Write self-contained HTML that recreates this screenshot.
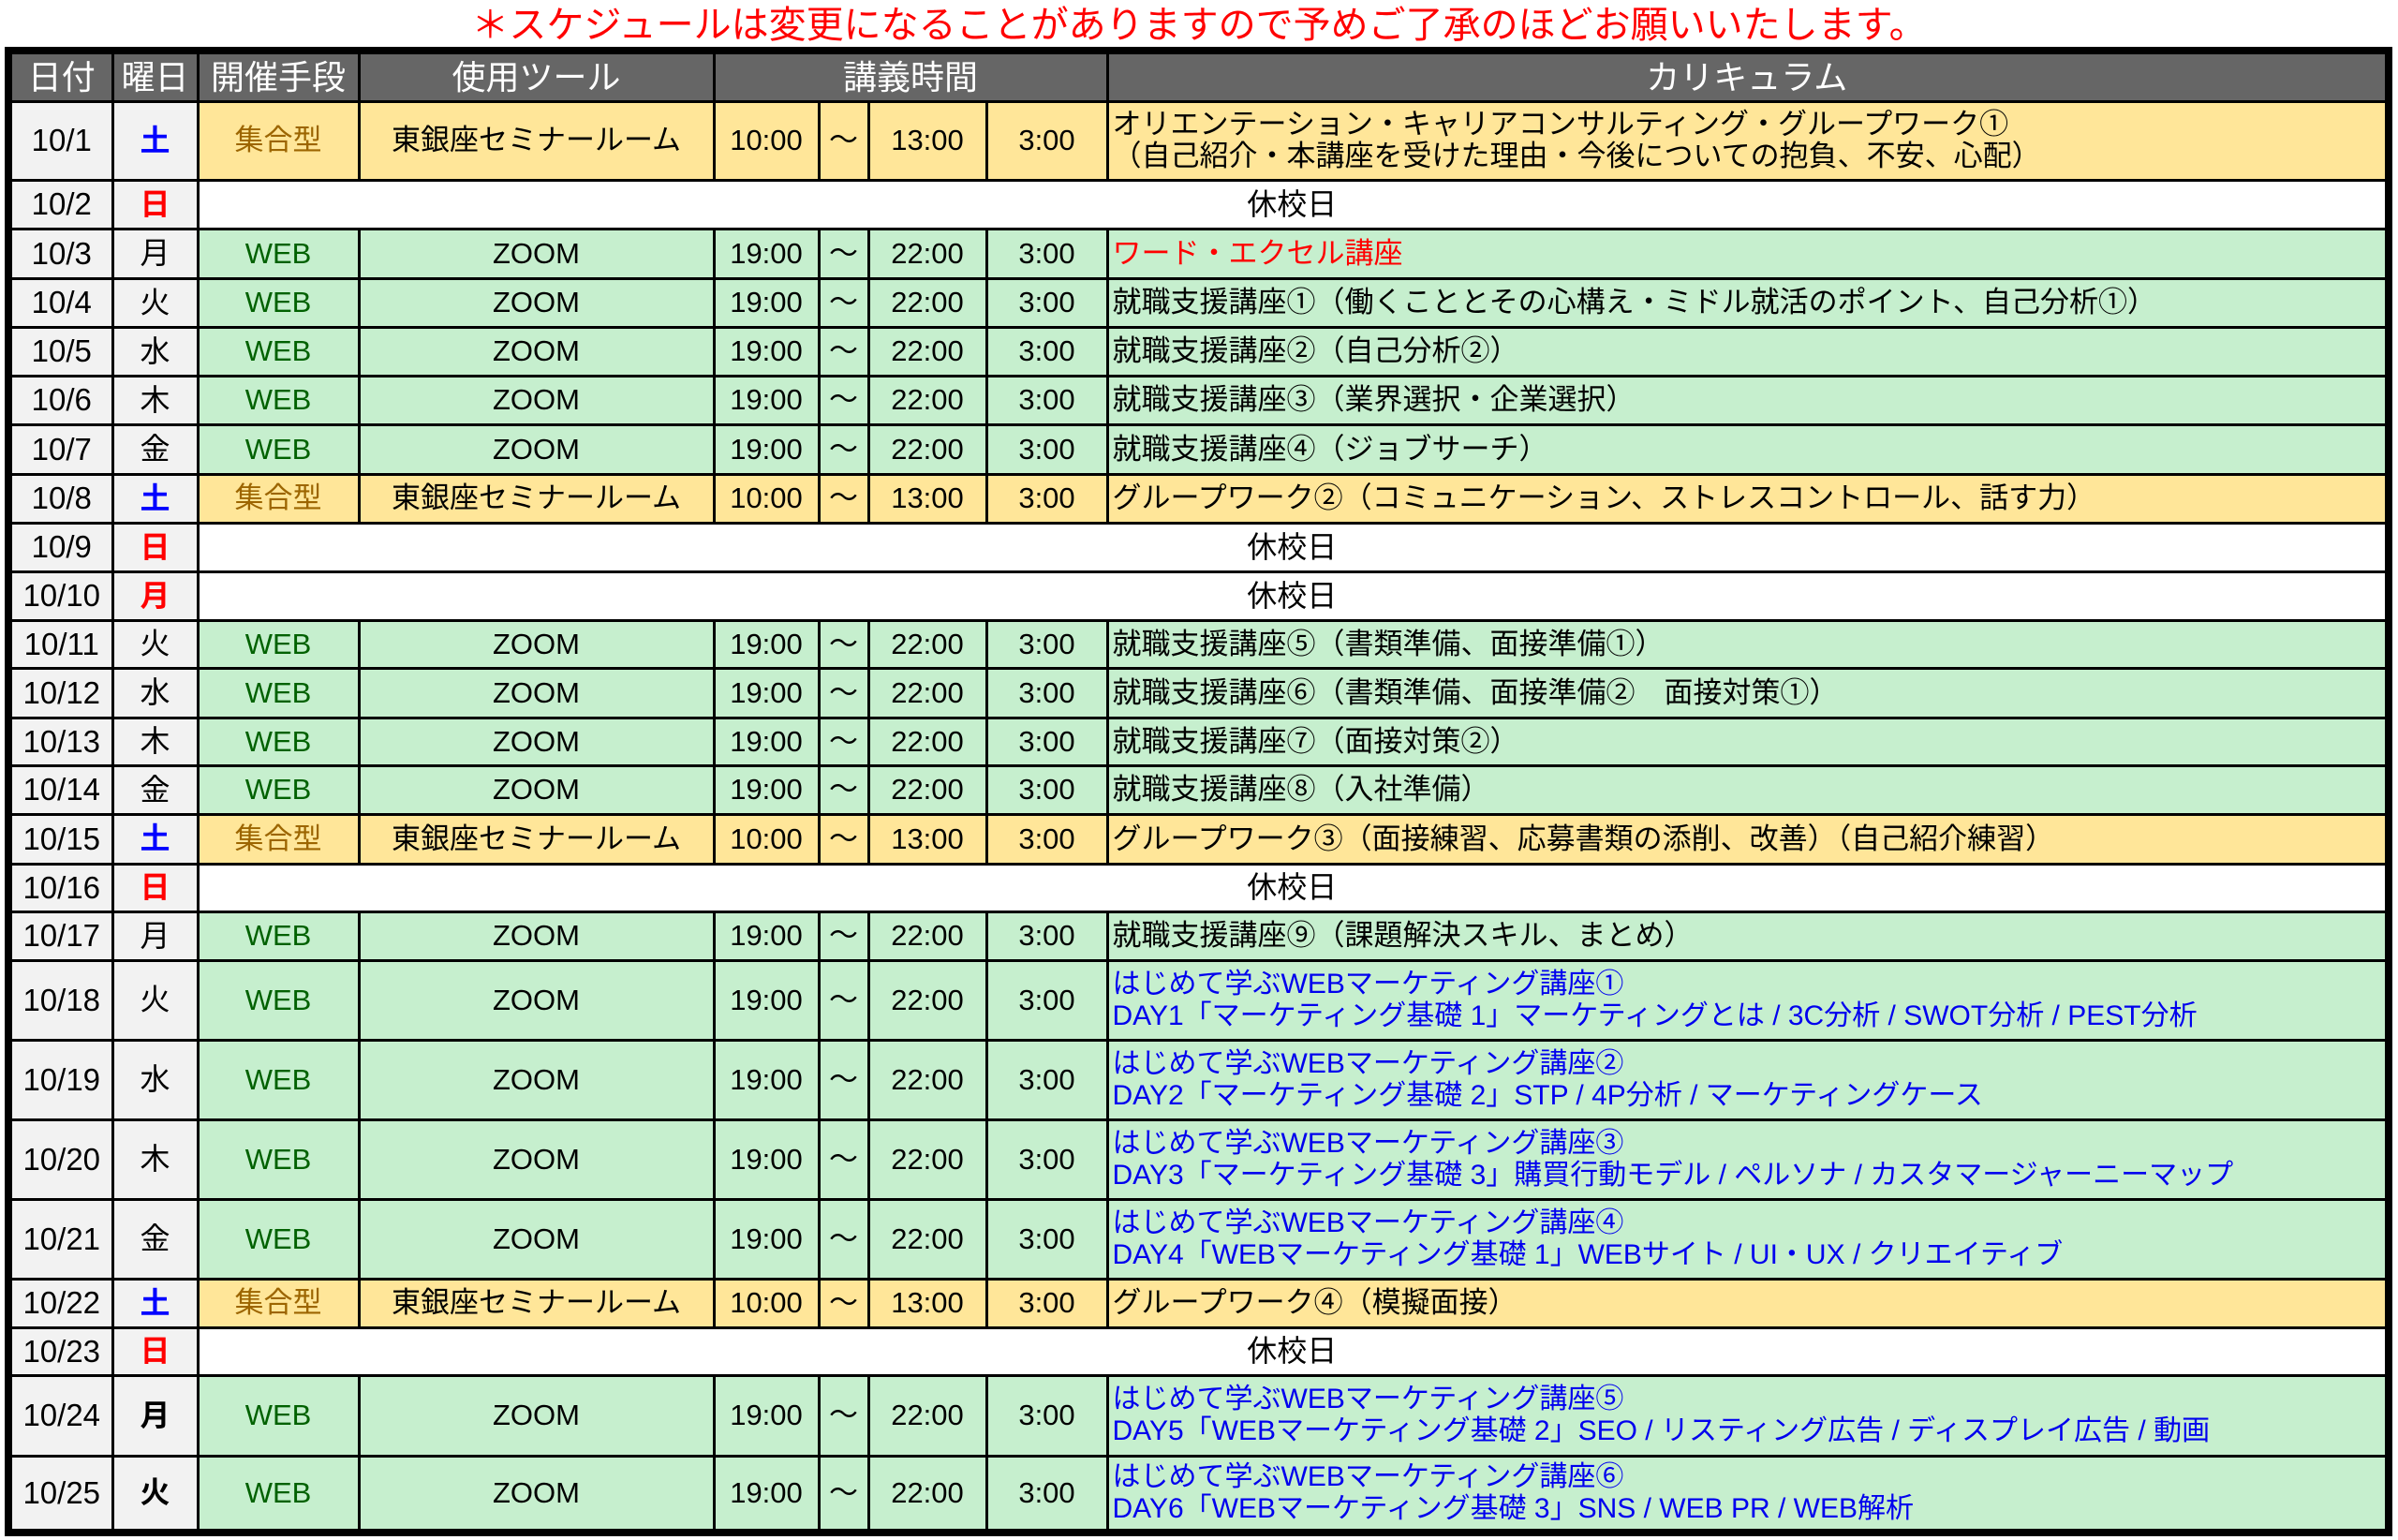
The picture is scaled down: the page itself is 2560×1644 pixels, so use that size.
<!DOCTYPE html>
<html><head><meta charset="utf-8">
<style>
html,body{margin:0;padding:0;background:#fff;width:2560px;height:1644px;overflow:hidden}
body{font-family:"Liberation Sans","Noto Sans CJK JP",sans-serif;color:#000;position:relative}
.title{position:absolute;top:0;left:0;width:2560px;height:54px;text-align:center;color:#ff0000;font-size:40px;line-height:54px;white-space:nowrap}
table{position:absolute;left:5px;top:50px;border-collapse:collapse;table-layout:fixed;border:8px solid #000}
td{border:3px solid #000;padding:0;text-align:center;vertical-align:middle;font-size:31px;line-height:1.15;white-space:nowrap;overflow:hidden}
tr.h td{background:#666;color:#fff;font-size:36px}
td.d{background:#f2f2f2;font-size:33px}
td.w{background:#f2f2f2;font-size:32px}
.Y td.c{background:#ffe699}
.G td.c{background:#c6efce}
.Y td.m{color:#9c6500}
.G td.m{color:#006100}
td.k{text-align:left;padding-left:4px;font-size:31px}
td.k2{text-align:left;padding-left:4px;font-size:30px;line-height:34px;color:#0000ee}
td.hol{background:#fff;font-size:32px}
.b{color:#0000ff;font-weight:bold}
.r{color:#ff0000;font-weight:bold}
.bk{font-weight:bold}
.red{color:#ff0000}
</style></head><body>
<div class="title">＊スケジュールは変更になることがありますので予めご了承のほどお願いいたします。</div>
<table>
<colgroup><col style="width:111px"><col style="width:91px"><col style="width:172px"><col style="width:379px"><col style="width:112px"><col style="width:53px"><col style="width:126px"><col style="width:129px"><col style="width:1368px"></colgroup>
<tr class="h" style="height:54px"><td>日付</td><td>曜日</td><td>開催手段</td><td>使用ツール</td><td colspan="4">講義時間</td><td>カリキュラム</td></tr>
<tr class="Y" style="height:84px"><td class="d">10/1</td><td class="w b">土</td><td class="c m">集合型</td><td class="c">東銀座セミナールーム</td><td class="c">10:00</td><td class="c">～</td><td class="c">13:00</td><td class="c">3:00</td><td class="c k" style="line-height:34px">オリエンテーション・キャリアコンサルティング・グループワーク①<br>（自己紹介・本講座を受けた理由・今後についての抱負、不安、心配）</td></tr>
<tr style="height:52px"><td class="d">10/2</td><td class="w r">日</td><td class="hol" colspan="7">休校日</td></tr>
<tr class="G" style="height:53px"><td class="d">10/3</td><td class="w">月</td><td class="c m">WEB</td><td class="c">ZOOM</td><td class="c">19:00</td><td class="c">～</td><td class="c">22:00</td><td class="c">3:00</td><td class="c k red">ワード・エクセル講座</td></tr>
<tr class="G" style="height:52px"><td class="d">10/4</td><td class="w">火</td><td class="c m">WEB</td><td class="c">ZOOM</td><td class="c">19:00</td><td class="c">～</td><td class="c">22:00</td><td class="c">3:00</td><td class="c k">就職支援講座①（働くこととその心構え・ミドル就活のポイント、自己分析①）</td></tr>
<tr class="G" style="height:52px"><td class="d">10/5</td><td class="w">水</td><td class="c m">WEB</td><td class="c">ZOOM</td><td class="c">19:00</td><td class="c">～</td><td class="c">22:00</td><td class="c">3:00</td><td class="c k">就職支援講座②（自己分析②）</td></tr>
<tr class="G" style="height:52px"><td class="d">10/6</td><td class="w">木</td><td class="c m">WEB</td><td class="c">ZOOM</td><td class="c">19:00</td><td class="c">～</td><td class="c">22:00</td><td class="c">3:00</td><td class="c k">就職支援講座③（業界選択・企業選択）</td></tr>
<tr class="G" style="height:53px"><td class="d">10/7</td><td class="w">金</td><td class="c m">WEB</td><td class="c">ZOOM</td><td class="c">19:00</td><td class="c">～</td><td class="c">22:00</td><td class="c">3:00</td><td class="c k">就職支援講座④（ジョブサーチ）</td></tr>
<tr class="Y" style="height:52px"><td class="d">10/8</td><td class="w b">土</td><td class="c m">集合型</td><td class="c">東銀座セミナールーム</td><td class="c">10:00</td><td class="c">～</td><td class="c">13:00</td><td class="c">3:00</td><td class="c k">グループワーク②（コミュニケーション、ストレスコントロール、話す力）</td></tr>
<tr style="height:52px"><td class="d">10/9</td><td class="w r">日</td><td class="hol" colspan="7">休校日</td></tr>
<tr style="height:52px"><td class="d">10/10</td><td class="w r">月</td><td class="hol" colspan="7">休校日</td></tr>
<tr class="G" style="height:51px"><td class="d">10/11</td><td class="w">火</td><td class="c m">WEB</td><td class="c">ZOOM</td><td class="c">19:00</td><td class="c">～</td><td class="c">22:00</td><td class="c">3:00</td><td class="c k">就職支援講座⑤（書類準備、面接準備①）</td></tr>
<tr class="G" style="height:53px"><td class="d">10/12</td><td class="w">水</td><td class="c m">WEB</td><td class="c">ZOOM</td><td class="c">19:00</td><td class="c">～</td><td class="c">22:00</td><td class="c">3:00</td><td class="c k">就職支援講座⑥（書類準備、面接準備②　面接対策①）</td></tr>
<tr class="G" style="height:51px"><td class="d">10/13</td><td class="w">木</td><td class="c m">WEB</td><td class="c">ZOOM</td><td class="c">19:00</td><td class="c">～</td><td class="c">22:00</td><td class="c">3:00</td><td class="c k">就職支援講座⑦（面接対策②）</td></tr>
<tr class="G" style="height:52px"><td class="d">10/14</td><td class="w">金</td><td class="c m">WEB</td><td class="c">ZOOM</td><td class="c">19:00</td><td class="c">～</td><td class="c">22:00</td><td class="c">3:00</td><td class="c k">就職支援講座⑧（入社準備）</td></tr>
<tr class="Y" style="height:53px"><td class="d">10/15</td><td class="w b">土</td><td class="c m">集合型</td><td class="c">東銀座セミナールーム</td><td class="c">10:00</td><td class="c">～</td><td class="c">13:00</td><td class="c">3:00</td><td class="c k">グループワーク③（面接練習、応募書類の添削、改善）（自己紹介練習）</td></tr>
<tr style="height:51px"><td class="d">10/16</td><td class="w r">日</td><td class="hol" colspan="7">休校日</td></tr>
<tr class="G" style="height:52px"><td class="d">10/17</td><td class="w">月</td><td class="c m">WEB</td><td class="c">ZOOM</td><td class="c">19:00</td><td class="c">～</td><td class="c">22:00</td><td class="c">3:00</td><td class="c k">就職支援講座⑨（課題解決スキル、まとめ）</td></tr>
<tr class="G" style="height:85px"><td class="d">10/18</td><td class="w">火</td><td class="c m">WEB</td><td class="c">ZOOM</td><td class="c">19:00</td><td class="c">～</td><td class="c">22:00</td><td class="c">3:00</td><td class="c k2">はじめて学ぶWEBマーケティング講座①<br>DAY1「マーケティング基礎 1」マーケティングとは / 3C分析 / SWOT分析 / PEST分析</td></tr>
<tr class="G" style="height:85px"><td class="d">10/19</td><td class="w">水</td><td class="c m">WEB</td><td class="c">ZOOM</td><td class="c">19:00</td><td class="c">～</td><td class="c">22:00</td><td class="c">3:00</td><td class="c k2">はじめて学ぶWEBマーケティング講座②<br>DAY2「マーケティング基礎 2」STP / 4P分析 / マーケティングケース</td></tr>
<tr class="G" style="height:85px"><td class="d">10/20</td><td class="w">木</td><td class="c m">WEB</td><td class="c">ZOOM</td><td class="c">19:00</td><td class="c">～</td><td class="c">22:00</td><td class="c">3:00</td><td class="c k2">はじめて学ぶWEBマーケティング講座③<br>DAY3「マーケティング基礎 3」購買行動モデル / ペルソナ / カスタマージャーニーマップ</td></tr>
<tr class="G" style="height:85px"><td class="d">10/21</td><td class="w">金</td><td class="c m">WEB</td><td class="c">ZOOM</td><td class="c">19:00</td><td class="c">～</td><td class="c">22:00</td><td class="c">3:00</td><td class="c k2">はじめて学ぶWEBマーケティング講座④<br>DAY4「WEBマーケティング基礎 1」WEBサイト / UI・UX / クリエイティブ</td></tr>
<tr class="Y" style="height:52px"><td class="d">10/22</td><td class="w b">土</td><td class="c m">集合型</td><td class="c">東銀座セミナールーム</td><td class="c">10:00</td><td class="c">～</td><td class="c">13:00</td><td class="c">3:00</td><td class="c k">グループワーク④（模擬面接）</td></tr>
<tr style="height:51px"><td class="d">10/23</td><td class="w r">日</td><td class="hol" colspan="7">休校日</td></tr>
<tr class="G" style="height:86px"><td class="d">10/24</td><td class="w bk">月</td><td class="c m">WEB</td><td class="c">ZOOM</td><td class="c">19:00</td><td class="c">～</td><td class="c">22:00</td><td class="c">3:00</td><td class="c k2">はじめて学ぶWEBマーケティング講座⑤<br>DAY5「WEBマーケティング基礎 2」SEO / リスティング広告 / ディスプレイ広告 / 動画</td></tr>
<tr class="G" style="height:82px"><td class="d">10/25</td><td class="w bk">火</td><td class="c m">WEB</td><td class="c">ZOOM</td><td class="c">19:00</td><td class="c">～</td><td class="c">22:00</td><td class="c">3:00</td><td class="c k2">はじめて学ぶWEBマーケティング講座⑥<br>DAY6「WEBマーケティング基礎 3」SNS / WEB PR / WEB解析</td></tr>
</table>
</body></html>
